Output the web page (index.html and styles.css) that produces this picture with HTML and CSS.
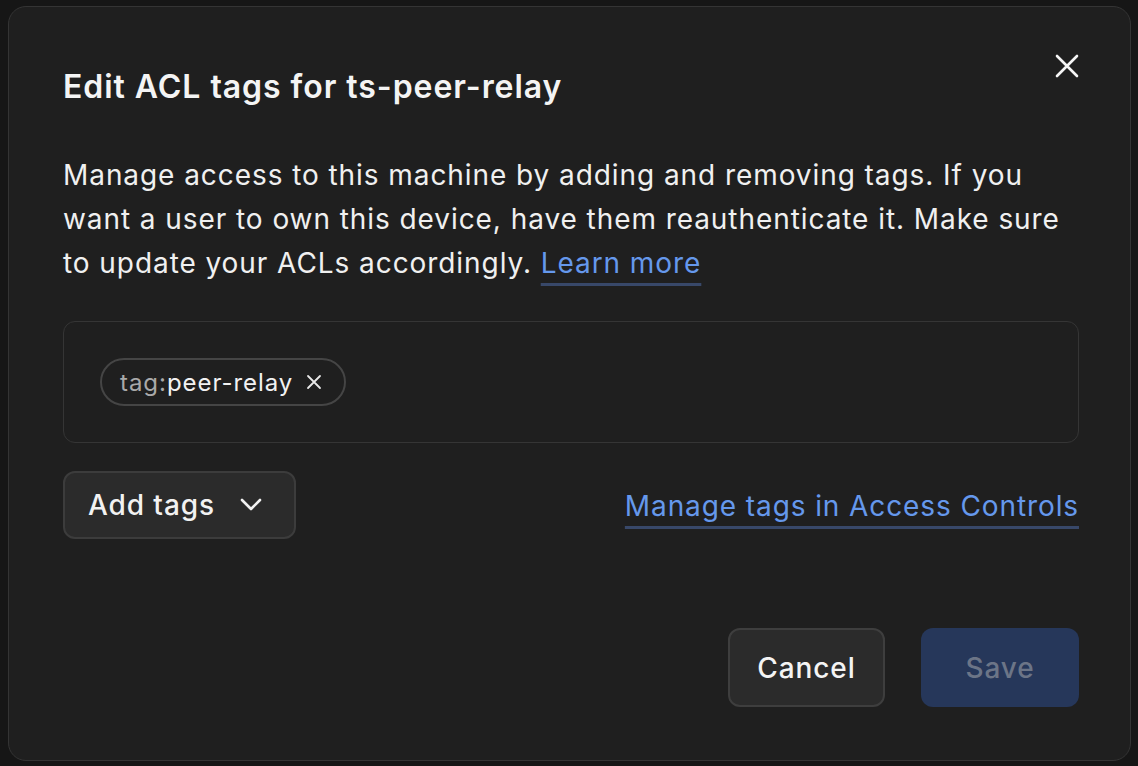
FILE: index.html
```html
<!DOCTYPE html>
<html lang="en">
<head>
<meta charset="utf-8">
<title>Edit ACL tags</title>
<link rel="stylesheet" href="styles.css">
</head>
<body>
<div class="modal">
  <button class="close" aria-label="Close">
    <svg width="24" height="24" viewBox="0 0 24 24"><path d="M2 2L22 22M22 2L2 22" stroke="#f5f5f5" stroke-width="2.6" stroke-linecap="round"/></svg>
  </button>
  <h1 class="title">Edit ACL tags for ts-peer-relay</h1>
  <p class="desc">Manage access to this machine by adding and removing tags. If you want a user to own this device, have them reauthenticate it. Make sure to update your ACLs accordingly. <a class="link" href="#">Learn more</a></p>
  <div class="tagbox">
    <span class="pill"><span class="pill-prefix">tag:</span>peer-relay
      <svg class="pill-x" width="16" height="16" viewBox="0 0 16 16"><path d="M2 2L14 14M14 2L2 14" stroke="#e8e8e8" stroke-width="1.8" stroke-linecap="round"/></svg>
    </span>
  </div>
  <div class="row">
    <button class="addtags">Add tags
      <svg class="chev" width="22" height="14" viewBox="0 0 22 14"><path d="M2 2L11 11L20 2" fill="none" stroke="#f2f2f2" stroke-width="2.6" stroke-linecap="round" stroke-linejoin="round"/></svg>
    </button>
    <a class="link" href="#">Manage tags in Access Controls</a>
  </div>
  <div class="footer">
    <button class="btn cancel">Cancel</button>
    <button class="btn save">Save</button>
  </div>
</div>
</body>
</html>
```
FILE: styles.css
```css
* { box-sizing: border-box; }
html, body {
  margin: 0;
  padding: 0;
  background: #161616;
  width: 1138px;
  height: 766px;
  overflow: hidden;
  font-family: Inter, "Noto Sans", sans-serif;
  color: #f2f2f2;
}
body { padding: 6px 0 0 8px; }
.modal {
  position: relative;
  width: 1123px;
  height: 755px;
  background: #1f1f1f;
  border: 1px solid #343434;
  border-radius: 18px;
  padding: 58px 51px 0 54px;
  display: flex;
  flex-direction: column;
}
.close {
  position: absolute;
  top: 43px;
  right: 47px;
  width: 32px;
  height: 32px;
  padding: 4px;
  border: 0;
  background: transparent;
  display: flex;
  align-items: center;
  justify-content: center;
}
.title {
  margin: 0;
  font-size: 32px;
  line-height: 44px;
  font-weight: 600;
  letter-spacing: 0.95px;
  color: #f4f4f4;
}
.desc {
  margin: 44px 0 0;
  font-size: 28px;
  line-height: 44px;
  font-weight: 400;
  letter-spacing: 0.93px;
  color: #f0f0f0;
}
.link {
  color: #6598ec;
  text-decoration: underline;
  text-decoration-color: #384869;
  text-decoration-thickness: 3px;
  text-underline-offset: 10px;
  text-decoration-skip-ink: none;
}
.tagbox {
  margin-top: 36px;
  border: 1px solid #353535;
  border-radius: 12px;
  padding: 36px;
  display: flex;
}
.pill {
  display: inline-flex;
  align-items: center;
  height: 48px;
  padding: 0 22px 0 18px;
  border: 2px solid #454545;
  border-radius: 24px;
  font-size: 24px;
  letter-spacing: 0.95px;
  color: #f2f2f2;
}
.pill-prefix { color: #a9a9a9; }
.pill-x { margin-left: 13px; }
.row {
  margin-top: 28px;
  display: flex;
  justify-content: space-between;
  align-items: center;
}
.row .link {
  font-size: 28px;
  line-height: 36px;
  letter-spacing: 0.9px;
  margin-top: 2px;
}
.addtags {
  height: 68px;
  padding: 0 32px 0 23px;
  background: #2b2b2b;
  border: 2px solid #3c3c3c;
  border-radius: 12px;
  font-family: inherit;
  font-size: 28px;
  font-weight: 500;
  letter-spacing: 0.9px;
  color: #f2f2f2;
  display: flex;
  align-items: center;
  gap: 25px;
}
.footer {
  margin-top: auto;
  margin-bottom: 53px;
  display: flex;
  justify-content: flex-end;
  gap: 36px;
}
.btn {
  height: 79px;
  width: 157px;
  border-radius: 12px;
  font-family: inherit;
  font-size: 28px;
  font-weight: 500;
  letter-spacing: 0.9px;
  display: flex;
  align-items: center;
  justify-content: center;
}
.cancel {
  background: #2b2b2b;
  border: 2px solid #3e3e3e;
  color: #f4f4f4;
}
.save {
  width: 158px;
  background: #26375a;
  border: 0;
  color: #6c7587;
}
```
